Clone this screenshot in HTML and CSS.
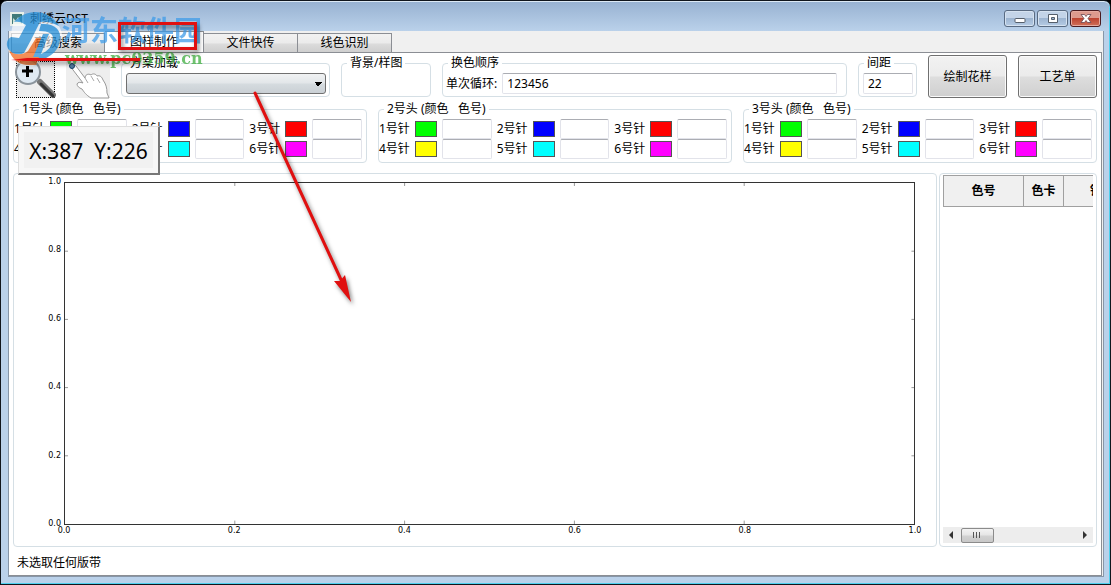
FILE: index.html
```html
<!DOCTYPE html>
<html lang="zh-CN">
<head>
    <meta charset="UTF-8">
    <meta name="viewport" content="width=device-width, initial-scale=1.0">
    <title>刺绣云DST</title>
    <link rel="stylesheet" href="styles.css">
</head>
<body>
    <div class="window">
        <header class="title-bar">
            <svg class="app-icon" width="14" height="14" viewBox="0 0 14 14" aria-hidden="true">
                <rect width="14" height="14" fill="#e8efe8"/>
                <path d="M2 2h10v10H2z" fill="#3f7a78"/>
                <path d="M3 12V6l3 3 2-4 4 7z" fill="#cfe3d8"/>
            </svg>
            <span class="title">刺绣云DST</span>
            <div class="window-buttons">
                <button type="button" aria-label="最小化">
                    <svg width="14" height="10" viewBox="0 0 14 10"><rect x="2" y="4.5" width="10" height="4" rx="1" fill="#fff" stroke="#555f6b"/></svg>
                </button>
                <button type="button" aria-label="最大化">
                    <svg width="14" height="10" viewBox="0 0 14 10"><path fill-rule="evenodd" d="M2.5.5h9v8h-9zM5.5 3.5v2h3v-2z" fill="#fff" stroke="#555f6b"/></svg>
                </button>
                <button type="button" class="close" aria-label="关闭">
                    <svg width="14" height="10" viewBox="0 0 14 10"><path d="M2 .5h3.500L7 2.500 8.500.5H12L9 4.500l3 4H8.500L7 6.500 5.500 8.500H2l3-4z" fill="#fff" stroke="#6b4650" stroke-width=".8"/></svg>
                </button>
            </div>
        </header>

        <div class="client">
            <nav class="tabs">
                <button type="button">高级搜索</button>
                <button type="button" class="active">图样制作</button>
                <button type="button">文件快传</button>
                <button type="button">线色识别</button>
            </nav>

            <main class="page">
                <div class="toolbar">
                    <button type="button" class="tool tool-zoom" aria-label="放大">
                        <svg width="42" height="40" viewBox="0 0 42 40">
                            <path d="M26 22l13 13" stroke="#777" stroke-width="6" stroke-linecap="round"/>
                            <path d="M27 24l12 12" stroke="#333" stroke-width="3" stroke-linecap="round"/>
                            <circle cx="14" cy="12" r="12" fill="#dfe9f2" stroke="#8b949c" stroke-width="2"/>
                            <path d="M8 11h11M13.500 6v11" stroke="#000" stroke-width="3"/>
                        </svg>
                    </button>
                    <button type="button" class="tool tool-hand" aria-label="选取">
                        <svg width="44" height="38" viewBox="0 0 44 38">
                            <path d="M4 5c2-3 4-2 6 0l9 12c0-3 3-5 6-3 2-2 5-1 6 1 3-1 5 1 6 4 3 4 4 8 4 13l2 5H25c-5-3-7-6-9-9-3-1-5-3-5-5 1-2 3-2 6-1z" fill="#fff" stroke="#999"/>
                            <path d="M19 17l3 5M25 15l3 5M31 17l3 5" fill="none" stroke="#aaa"/>
                            <circle cx="6" cy="5" r="2.500" fill="#557fa3" stroke="#173f66"/>
                        </svg>
                    </button>
                    <fieldset class="group scheme">
                        <legend>方案加载</legend>
                        <select aria-label="方案加载"><option></option></select>
                    </fieldset>
                    <fieldset class="group background">
                        <legend>背景/样图</legend>
                    </fieldset>
                    <fieldset class="group sequence">
                        <legend>换色顺序</legend>
                        <label for="loop">单次循环:</label>
                        <input type="text" id="loop" value="123456">
                    </fieldset>
                    <fieldset class="group spacing">
                        <legend>间距</legend>
                        <input type="text" aria-label="间距" value="22">
                    </fieldset>
                    <button type="button" class="command">绘制花样</button>
                    <button type="button" class="command">工艺单</button>
                </div>

                <div class="heads">
                    <fieldset class="group head">
                        <legend>1号头 (颜色&nbsp;&nbsp; 色号)</legend>
                        <label for="h1n1">1号针</label><i class="swatch green"></i><input type="text" id="h1n1">
                        <label for="h1n2">2号针</label><i class="swatch blue"></i><input type="text" id="h1n2">
                        <label for="h1n3">3号针</label><i class="swatch red"></i><input type="text" id="h1n3">
                        <label for="h1n4">4号针</label><i class="swatch yellow"></i><input type="text" id="h1n4">
                        <label for="h1n5">5号针</label><i class="swatch cyan"></i><input type="text" id="h1n5">
                        <label for="h1n6">6号针</label><i class="swatch magenta"></i><input type="text" id="h1n6">
                    </fieldset>
                    <fieldset class="group head">
                        <legend>2号头 (颜色&nbsp;&nbsp; 色号)</legend>
                        <label for="h2n1">1号针</label><i class="swatch green"></i><input type="text" id="h2n1">
                        <label for="h2n2">2号针</label><i class="swatch blue"></i><input type="text" id="h2n2">
                        <label for="h2n3">3号针</label><i class="swatch red"></i><input type="text" id="h2n3">
                        <label for="h2n4">4号针</label><i class="swatch yellow"></i><input type="text" id="h2n4">
                        <label for="h2n5">5号针</label><i class="swatch cyan"></i><input type="text" id="h2n5">
                        <label for="h2n6">6号针</label><i class="swatch magenta"></i><input type="text" id="h2n6">
                    </fieldset>
                    <fieldset class="group head">
                        <legend>3号头 (颜色&nbsp;&nbsp; 色号)</legend>
                        <label for="h3n1">1号针</label><i class="swatch green"></i><input type="text" id="h3n1">
                        <label for="h3n2">2号针</label><i class="swatch blue"></i><input type="text" id="h3n2">
                        <label for="h3n3">3号针</label><i class="swatch red"></i><input type="text" id="h3n3">
                        <label for="h3n4">4号针</label><i class="swatch yellow"></i><input type="text" id="h3n4">
                        <label for="h3n5">5号针</label><i class="swatch cyan"></i><input type="text" id="h3n5">
                        <label for="h3n6">6号针</label><i class="swatch magenta"></i><input type="text" id="h3n6">
                    </fieldset>
                </div>

                <div class="workspace">
                    <section class="panel chart">
                        <div class="y-axis">
                            <span>1.0</span><span>0.8</span><span>0.6</span><span>0.4</span><span>0.2</span><span>0.0</span>
                        </div>
                        <div class="plot">
                            <svg width="100%" height="100%" aria-hidden="true">
                                <g stroke="#999">
                                    <line x1="20%" x2="20%" y1="0" y2="3"/>
                                    <line x1="40%" x2="40%" y1="0" y2="3"/>
                                    <line x1="60%" x2="60%" y1="0" y2="3"/>
                                    <line x1="80%" x2="80%" y1="0" y2="3"/>
                                    <line x1="0" x2="3" y1="20%" y2="20%"/>
                                    <line x1="0" x2="3" y1="40%" y2="40%"/>
                                    <line x1="0" x2="3" y1="60%" y2="60%"/>
                                    <line x1="0" x2="3" y1="80%" y2="80%"/>
                                    <line x1="99.7%" x2="100%" y1="20%" y2="20%"/>
                                    <line x1="99.7%" x2="100%" y1="40%" y2="40%"/>
                                    <line x1="99.7%" x2="100%" y1="60%" y2="60%"/>
                                    <line x1="99.7%" x2="100%" y1="80%" y2="80%"/>
                                    <line x1="20%" x2="20%" y1="99%" y2="100%"/>
                                    <line x1="40%" x2="40%" y1="99%" y2="100%"/>
                                    <line x1="60%" x2="60%" y1="99%" y2="100%"/>
                                    <line x1="80%" x2="80%" y1="99%" y2="100%"/>
                                </g>
                            </svg>
                        </div>
                        <div class="x-axis">
                            <span>0.0</span><span>0.2</span><span>0.4</span><span>0.6</span><span>0.8</span><span>1.0</span>
                        </div>
                    </section>

                    <section class="panel colors">
                        <div class="table-view">
                            <table>
                                <thead>
                                    <tr><th class="col-number">色号</th><th class="col-card">色卡</th><th class="col-needle">针号</th></tr>
                                </thead>
                            </table>
                        </div>
                        <div class="scrollbar">
                            <svg width="16" height="16" viewBox="0 0 16 16" aria-hidden="true"><path d="M10 4v8L6 8z" fill="#333"/></svg>
                            <span class="thumb"></span>
                            <svg class="right" width="16" height="16" viewBox="0 0 16 16" aria-hidden="true"><path d="M6 4v8l4-4z" fill="#333"/></svg>
                        </div>
                    </section>
                </div>

                <footer class="status">未选取任何版带</footer>
            </main>
        </div>
    </div>

    <div class="coords">X:387&nbsp; Y:226</div>

    <div class="watermark">
        <svg class="mark" width="60" height="60" viewBox="0 0 60 60" aria-hidden="true">
            <path d="M8 13C16 2 34 0 45 7c8 6 12 12 12 20-2 10-9 17-18 21l-11 8C14 57 5 50 3 40z" fill="#fff" opacity=".8"/>
            <path d="M9 12C18 1 34-1 44 6c5 3 8 6 10 10-7-4-13-5-19-4l-9 18-7 13c-5 3-12 2-15-3-4-5-2-11 2-13l8 1 7-13c-4-3-8-4-12-3z" fill="#2790d8"/>
            <path d="M4 40c4 5 13 6 19 1l8-13h6L26 55C15 56 7 50 4 40z" fill="#f26a1f"/>
            <path fill-rule="evenodd" d="M36 14c14-1 21 6 19 17-2 12-13 19-29 21l3-7 9-21h6l-8 20c7-3 11-8 12-14 1-6-4-9-14-9z" fill="#2790d8"/>
            <path d="M26 47h8l-3 8h-8z" fill="#f26a1f"/>
        </svg>
        <div class="watermark-name">河东软件园</div>
        <div class="watermark-url">www.pc0359.cn</div>
    </div>

    <svg class="notes" width="360" height="310" viewBox="0 0 360 310" aria-hidden="true">
        <g class="note-shadow" fill="none" stroke="#e01010" stroke-width="3">
            <rect x="119.500" y="23.500" width="76" height="25"/>
            <path d="M11 60l16-2h113v3H27z" fill="#e01010" stroke="none"/>
            <path d="M255 93l88 191" stroke-linecap="round"/>
            <path d="M351 302l-17-21 6 0 5-6z" fill="#e01010" stroke="none"/>
        </g>
    </svg>
</body>
</html>
```

FILE: styles.css
```css
* {
    box-sizing: border-box;
}

body {
    margin: 0;
    font-family: "Noto Sans", "Noto Sans CJK SC", sans-serif;
    font-size: 12px;
    line-height: 16px;
    color: #000;
    background-color: #000;
    overflow: hidden;
}

button, input, select {
    font: inherit;
    color: inherit;
    margin: 0;
    padding: 0;
}

svg {
    display: block;
}

/* window frame */
.window {
    display: flex;
    flex-direction: column;
    height: 100vh;
    padding: 0 6px 7px 7px;
    border: 1px solid #10151c;
    border-radius: 7px 7px 0 0;
    background: linear-gradient(#97b1d1, #bad1ea 30px, #bad1ea);
    box-shadow: inset 0 1px #dce9f5, inset -1px -1px #4fd0ee;
}

.title-bar {
    display: flex;
    align-items: center;
    height: 30px;
    padding: 5px 3px 0 2px;
}

.title {
    margin-left: 6px;
}

.window-buttons {
    display: flex;
    gap: 2px;
    margin-left: auto;
}

.window-buttons button {
    display: flex;
    align-items: center;
    justify-content: center;
    width: 31px;
    height: 17px;
    border: 1px solid #596b82;
    border-radius: 3px;
    background: linear-gradient(#c3d4e8 45%, #9db5d1 50%, #b5cbe4);
    box-shadow: inset 0 0 0 1px #d5e2f0;
}

.window-buttons .close {
    border-color: #4a1b20;
    background: linear-gradient(#dd9a8e 45%, #bd4431 50%, #d0705a);
    box-shadow: inset 0 0 0 1px #e5aaa0;
}

.client {
    display: flex;
    flex: 1;
    flex-direction: column;
    min-height: 0;
    padding-right: 1px;
    border: 1px solid #8796a8;
    border-top: none;
    background-color: #f0f0f0;
}

/* tabs */
.tabs {
    display: flex;
    align-items: flex-end;
    height: 21px;
    padding-left: 2px;
}

.tabs button {
    width: 94px;
    height: 19px;
    border: 1px solid #8b8e94;
    border-left-width: 0;
    border-bottom: none;
    background: linear-gradient(#f2f2f2, #ebebeb 50%, #dcdcdc 55%, #cfcfcf);
}

.tabs button:first-child {
    border-left-width: 1px;
}

.tabs .active {
    width: 99px;
    height: 21px;
    background: #fff;
}

.page {
    display: flex;
    flex: 1;
    flex-direction: column;
    min-height: 0;
    padding: 2px 4px 3px 4px;
    border: 1px solid #8b8e94;
    border-left: none;
    background-color: #fff;
}

/* group boxes */
.group {
    min-width: 0;
    margin: 0;
    padding: 0;
    border: 1px solid #d5dfe5;
    border-radius: 4px;
}

.group legend {
    margin-left: 5px;
    padding: 0 3px;
}

.group input {
    border: 1px solid #e2e3ea;
    border-top-color: #abadb3;
    border-radius: 2px;
    background-color: #fff;
}

.toolbar {
    display: flex;
    gap: 11px;
    height: 43px;
}

.toolbar .group {
    height: 42px;
}

.tool {
    align-self: flex-end;
    height: 37px;
    border: none;
    background: #eee;
}

.tool-zoom {
    width: 39px;
    margin-left: 3px;
    border: 1px dotted #000;
}

.tool-zoom svg {
    margin: -3px;
}

.tool-hand {
    width: 44px;
}

.scheme {
    width: 209px;
}

.scheme select {
    display: block;
    width: 200px;
    height: 21px;
    margin: 2px 4px;
    appearance: none;
    border: 1px solid #707070;
    border-radius: 3px;
    background:
        conic-gradient(from -45deg at 50% 100%, #000 90deg, transparent 0) right 3px center / 8px 4px no-repeat,
        linear-gradient(#f0f2f3, #e2e6e9 48%, #d5dbdf 52%, #cad0d5);
}

.background {
    width: 90px;
}

.sequence {
    flex: 1;
}

.sequence label {
    margin: 0 2px 0 3px;
}

.sequence input {
    width: calc(100% - 68px);
    height: 21px;
    margin-top: 2px;
    padding-left: 4px;
}

.spacing {
    width: 59px;
}

.spacing input {
    display: block;
    width: 50px;
    height: 21px;
    margin: 2px 4px;
    padding-left: 4px;
}

.command {
    width: 79px;
    border: 1px solid #707070;
    border-radius: 3px;
    background: linear-gradient(#f2f2f2, #ebebeb 48%, #dddddd 52%, #cfcfcf);
    box-shadow: inset 0 0 0 1px #fafafa;
}

/* needle colours */
.heads {
    display: grid;
    grid-template-columns: repeat(3, 1fr);
    gap: 11px;
    margin-top: 3px;
}

.head {
    display: grid;
    grid-template-columns: repeat(3, 31px 22px 1fr);
    grid-auto-rows: 20px;
    align-content: start;
    align-items: center;
    column-gap: 5px;
    height: 62px;
    padding: 2px 4px 0 0;
    line-height: 20px;
}

.head legend {
    line-height: 16px;
}

.head label {
    white-space: nowrap;
}

.head input {
    width: 100%;
    height: 20px;
}

.swatch {
    width: 22px;
    height: 16px;
    border: 1px solid #555;
}

.green { background-color: #00ff00; }
.blue { background-color: #0000ff; }
.red { background-color: #ff0000; }
.yellow { background-color: #ffff00; }
.cyan { background-color: #00ffff; }
.magenta { background-color: #ff00ff; }

/* chart and colour table */
.workspace {
    display: flex;
    flex: 1;
    gap: 2px;
    min-height: 0;
    margin-top: 10px;
}

.panel {
    border: 1px solid #d5dfe5;
    border-radius: 4px;
}

.chart {
    display: grid;
    flex: 1;
    grid-template-columns: 50px 1fr;
    grid-template-rows: 1fr 21px;
    padding: 8px 21px 0 0;
    font-family: "DejaVu Sans", sans-serif;
    font-size: 8px;
    line-height: 12px;
}

.plot {
    border: 1px solid #333;
}

.y-axis {
    display: flex;
    flex-direction: column;
    justify-content: space-between;
    margin: -6px 3px -5px 0;
    text-align: right;
}

.x-axis {
    display: flex;
    grid-column: 2;
    justify-content: space-between;
    margin: 0 -10px;
    text-align: center;
}

.x-axis span {
    width: 20px;
}

.colors {
    display: flex;
    flex-direction: column;
    width: 158px;
    padding: 1px 3px 3px 3px;
}

.table-view {
    flex: 1;
    overflow: hidden;
}

table {
    width: 198px;
    table-layout: fixed;
    border-collapse: collapse;
}

th {
    height: 31px;
    padding: 0;
    border: 1px solid #a0a0a0;
    background-color: #f0f0f0;
}

.col-number {
    width: 80px;
}

.col-card {
    width: 40px;
}

.scrollbar {
    display: flex;
    align-items: center;
    height: 16px;
    background-color: #ededed;
}

.thumb {
    width: 33px;
    height: 15px;
    margin-left: 2px;
    border: 1px solid #8b8b8b;
    border-radius: 2px;
    background:
        repeating-linear-gradient(90deg, #555 0 1px, transparent 1px 3px) center / 9px 6px no-repeat,
        linear-gradient(#f3f3f3, #e5e5e5 48%, #d2d2d2 52%, #c8c8c8);
}

.scrollbar .right {
    margin-left: auto;
}

.status {
    padding: 8px 4px 0;
    height: 25px;
}

/* overlays */
.coords {
    position: absolute;
    left: 18px;
    top: 126px;
    width: 142px;
    height: 49px;
    border: 1px solid #ddd;
    border-right: 2px solid #777;
    border-bottom: 2px solid #777;
    background-color: #f1f1f1;
    box-shadow: inset 0 0 0 5px #f7f7f7;
    font-size: 21px;
    line-height: 48px;
    text-align: center;
}

.watermark {
    position: absolute;
    left: 5px;
    top: 10px;
    display: grid;
    grid-template-columns: 57px auto;
    opacity: 0.75;
    pointer-events: none;
}

.mark {
    grid-row: 1 / 3;
}

.watermark-name {
    font-family: "Noto Sans CJK SC", sans-serif;
    font-size: 28px;
    font-weight: bold;
    line-height: 38px;
    color: #3f9ce8;
}

.watermark-url {
    padding-left: 3px;
    font-family: "DejaVu Serif", serif;
    font-size: 16px;
    font-weight: bold;
    line-height: 18px;
    color: #3fae3f;
}

.notes {
    position: absolute;
    left: 0;
    top: 0;
    pointer-events: none;
}

.note-shadow {
    filter: drop-shadow(2px 3px 2px rgba(0, 0, 0, 0.5));
}
```
